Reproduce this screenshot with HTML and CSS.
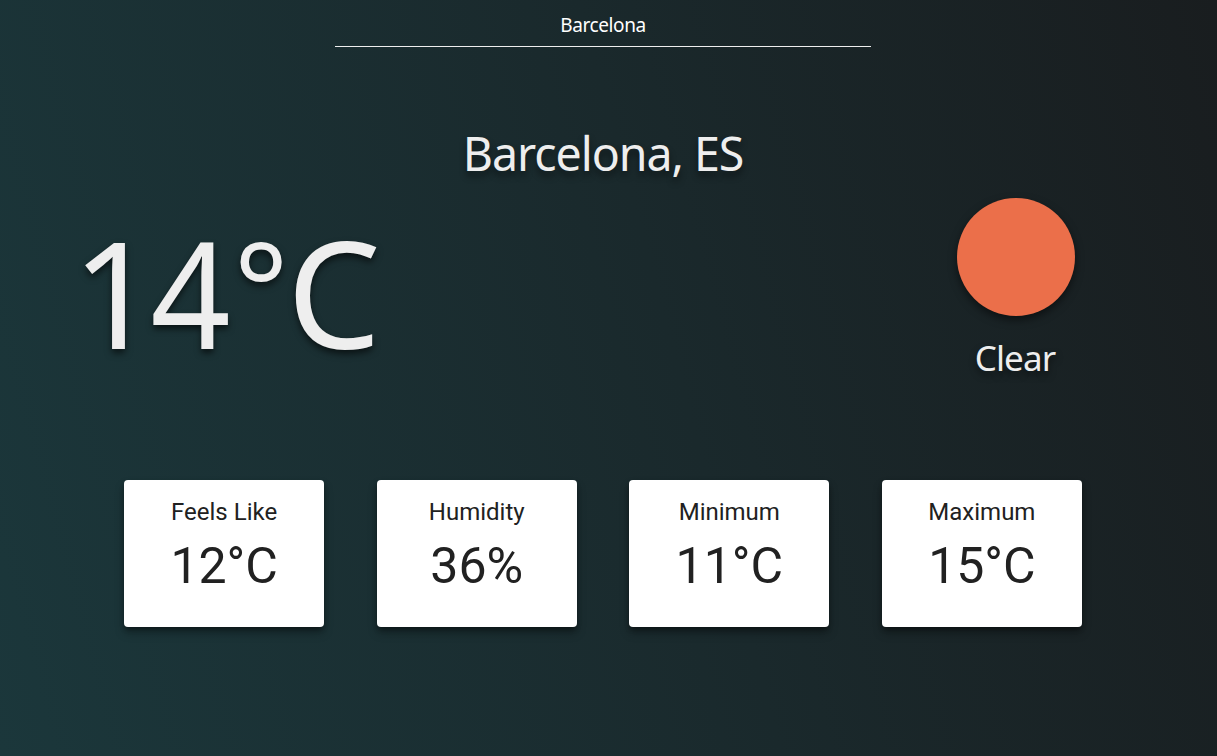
FILE: index.html
```html
<!DOCTYPE html>
<html lang="en">
<head>
<meta charset="utf-8">
<title>Weather</title>
<link rel="stylesheet" href="styles.css">
</head>
<body>
<main class="app">
  <input class="search" type="text" value="Barcelona" aria-label="City">
  <h1 class="city">Barcelona, ES</h1>
  <section class="current">
    <div class="temperature"><span>1</span><span class="four">4</span><span class="degree">°</span><span class="unit">C</span></div>
    <div class="condition">
      <svg class="sun" viewBox="0 0 120 120" width="120" height="120"><circle cx="60" cy="60" r="59" fill="#eb6f4a"/></svg>
      <div class="label">Clear</div>
    </div>
  </section>
  <section class="cards">
    <article class="card"><h2 class="name">Feels Like</h2><p class="value">12°C</p></article>
    <article class="card"><h2 class="name">Humidity</h2><p class="value">36%</p></article>
    <article class="card"><h2 class="name">Minimum</h2><p class="value">11°C</p></article>
    <article class="card"><h2 class="name">Maximum</h2><p class="value">15°C</p></article>
  </section>
</main>
</body>
</html>
```
FILE: styles.css
```css
* { box-sizing: border-box; }
body {
  margin: 0;
  height: 756px;
  overflow: hidden;
  background: linear-gradient(75deg, #1b373b, #1a292c 55%, #191d1f);
  font-family: "Noto Sans", "Open Sans", sans-serif;
  color: #eee;
}
.app {
  width: 1206px;
  display: flex;
  flex-direction: column;
  align-items: center;
}
.search {
  width: 536px;
  height: 47px;
  padding: 4px 0 0;
  border: 0;
  border-bottom: 1px solid #eee;
  background: transparent;
  color: #fff;
  font: 19px "Noto Sans", sans-serif;
  letter-spacing: -0.4px;
  text-align: center;
  outline: 0;
}
.city {
  margin: 74px 0 1px;
  font-size: 46.5px;
  font-weight: 400;
  line-height: 64px;
  letter-spacing: -1.05px;
  text-shadow: 0 5px 7px rgba(0, 0, 0, .45);
}
.current {
  width: 100%;
  height: 294px;
  display: flex;
  justify-content: space-between;
  padding: 11px 130px 0 72px;
}
.temperature {
  height: 200px;
  margin-top: -5px;
  white-space: nowrap;
  font-size: 149px;
  line-height: 200px;
  text-shadow: 0 4px 7px rgba(0, 0, 0, .6);
}
.temperature span {
  display: inline-block;
}
.temperature .four {
  margin: 0 2px 0 -9px;
  transform: scaleX(.94);
}
.temperature .degree {
  margin-left: -2px;
  font-size: 129px;
  line-height: 100px;
  vertical-align: 13px;
}
.temperature .unit {
  margin-left: -2px;
}
.condition {
  width: 120px;
  display: flex;
  flex-direction: column;
  align-items: center;
}
.sun {
  filter: drop-shadow(0 4px 4px rgba(0, 0, 0, .5));
}
.label {
  margin: 16px 2px 0 0;
  font-size: 35px;
  line-height: 50px;
  letter-spacing: -0.9px;
  text-shadow: 0 4px 7px rgba(0, 0, 0, .5);
}
.cards {
  display: flex;
  gap: 52.6px;
}
.card {
  width: 200px;
  height: 147px;
  padding-top: 16px;
  border-radius: 4px;
  background: #fff;
  color: #212121;
  font-family: Roboto, sans-serif;
  text-align: center;
  box-shadow: 0 3px 5px -1px rgba(0, 0, 0, .4), 0 6px 10px rgba(0, 0, 0, .28);
}
.name {
  margin: 0;
  font-size: 24px;
  font-weight: 400;
  line-height: 32px;
}
.value {
  margin: 9px 0 0;
  font-size: 50px;
  line-height: 58px;
}
```
